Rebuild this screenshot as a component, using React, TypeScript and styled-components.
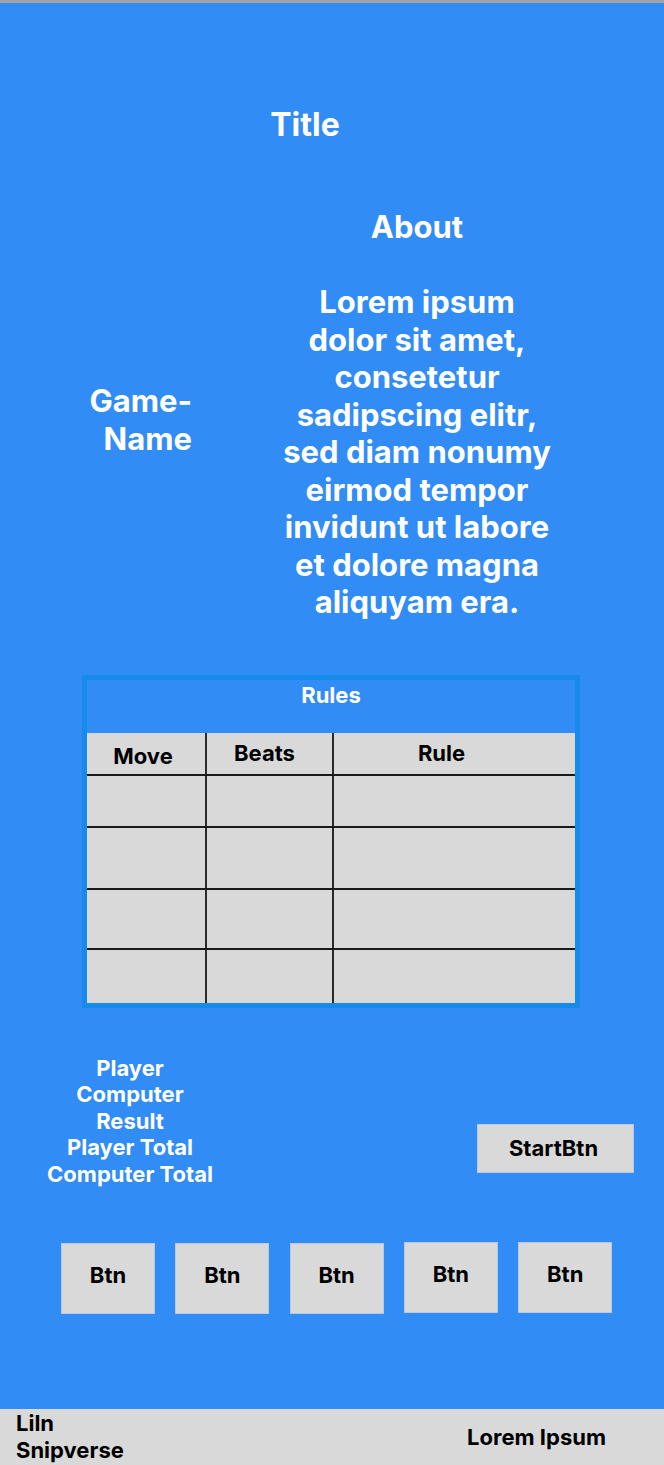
import * as React from 'react';
import styled, { createGlobalStyle } from 'styled-components';

const GlobalStyle = createGlobalStyle`
  html, body {
    margin: 0;
    padding: 0;
  }
  body {
    background: #318cf6;
    font-family: Inter, "Noto Sans", "Liberation Sans", sans-serif;
    font-weight: 700;
    color: #ffffff;
  }
  * {
    box-sizing: border-box;
  }
`;

const Page = styled.div`
  display: flex;
  flex-direction: column;
  min-height: 100vh;
  border-top: 3px solid #a3a3a3;
`;

const Main = styled.main`
  display: flex;
  flex-direction: column;
  flex: 1;
`;

const Header = styled.header`
  display: flex;
  justify-content: center;
  padding: 103px 54px 0 0;
`;

const Heading = styled.h1`
  margin: 0;
  font-size: 32px;
  line-height: 38px;
  font-weight: 700;
`;

const Hero = styled.section`
  display: grid;
  grid-template-columns: 192px 272px;
  column-gap: 89px;
  align-items: center;
  margin-top: 64px;
`;

const GameName = styled.div`
  text-align: right;
  font-size: 31px;
  line-height: 37.5px;
  padding-top: 11px;
`;

const AboutColumn = styled.div`
  display: flex;
  flex-direction: column;
  align-items: center;
  text-align: center;
`;

const AboutTitle = styled.h2`
  margin: 0 0 37px;
  font-size: 31px;
  line-height: 38px;
  font-weight: 700;
`;

const AboutText = styled.p`
  margin: 0;
  font-size: 31px;
  line-height: 37.5px;
`;

const RulesBox = styled.section`
  width: 498px;
  margin: 54px 0 0 82px;
  border: 5px solid #168be9;
`;

const RulesTitle = styled.div`
  height: 53px;
  padding-top: 2px;
  text-align: center;
  font-size: 22px;
  line-height: 27px;
`;

const Table = styled.table`
  width: 100%;
  border-collapse: collapse;
  table-layout: fixed;
  background: #d9d9d9;
  color: #000000;
`;

const HeadCell = styled.th<{ $width?: number; $drop?: number; $shift?: number }>`
  width: ${(p) => (p.$width ? `${p.$width}px` : 'auto')};
  height: 42px;
  padding: ${(p) => 7 + (p.$drop ?? 0)}px ${(p) => (p.$shift ?? 0) * 2}px 0 0;
  vertical-align: top;
  font-size: 22px;
  line-height: 27px;
  font-weight: 700;
  text-align: center;
  border-right: 2px solid #2a2a2a;
  border-bottom: 2px solid #1a1a1a;
  &:last-child {
    border-right: none;
  }
`;

const Row = styled.tr<{ $height: number }>`
  height: ${(p) => p.$height}px;
  & > td {
    border-right: 2px solid #2a2a2a;
    border-bottom: 2px solid #1a1a1a;
    padding: 0;
  }
  & > td:last-child {
    border-right: none;
  }
  &:last-child > td {
    border-bottom: none;
  }
`;

const ScoreRow = styled.section`
  display: flex;
  align-items: flex-start;
  justify-content: space-between;
  margin-top: 47px;
  padding: 0 30px;
`;

const Stats = styled.div`
  width: 200px;
  text-align: center;
  font-size: 22px;
  line-height: 26.5px;
`;

const GreyButton = styled.button`
  background: #d9d9d9;
  border: 1px solid #b7c9e3;
  border-radius: 0;
  color: #000000;
  font-family: inherit;
  font-weight: 700;
  font-size: 22px;
  padding: 0;
  cursor: pointer;
`;

const StartButton = styled(GreyButton)`
  width: 157px;
  height: 49px;
  margin-top: 69px;
  padding-right: 4px;
`;

const MoveRow = styled.section`
  display: flex;
  gap: 20.3px;
  margin-top: 56px;
  padding-left: 61px;
`;

const MoveButton = styled(GreyButton)<{ $lift?: boolean }>`
  width: 94px;
  height: 71px;
  padding-bottom: 7px;
  margin-top: ${(p) => (p.$lift ? -1 : 0)}px;
`;

const Footer = styled.footer`
  display: flex;
  align-items: center;
  justify-content: space-between;
  height: 56px;
  padding: 0 58px 0 16px;
  background: #d9d9d9;
  color: #000000;
  font-size: 22px;
`;

const Brand = styled.div`
  line-height: 27px;
`;

const FooterNote = styled.div`
  line-height: 27px;
`;

const rowHeights = [52, 62, 60, 54];
const moves = [false, false, false, true, true];

export default function App() {
  return (
    <Page>
      <GlobalStyle />
      <Main>
        <Header>
          <Heading>Title</Heading>
        </Header>
        <Hero>
          <GameName>
            Game-
            <br />
            Name
          </GameName>
          <AboutColumn>
            <AboutTitle>About</AboutTitle>
            <AboutText>
              Lorem ipsum dolor sit amet, consetetur sadipscing elitr, sed diam
              nonumy eirmod tempor invidunt ut labore et dolore magna aliquyam
              era.
            </AboutText>
          </AboutColumn>
        </Hero>
        <RulesBox>
          <RulesTitle>Rules</RulesTitle>
          <Table>
            <thead>
              <tr>
                <HeadCell $width={119} $drop={3} $shift={3}>
                  Move
                </HeadCell>
                <HeadCell $width={127} $shift={5}>
                  Beats
                </HeadCell>
                <HeadCell $shift={13}>Rule</HeadCell>
              </tr>
            </thead>
            <tbody>
              {rowHeights.map((h, i) => (
                <Row key={i} $height={h}>
                  <td />
                  <td />
                  <td />
                </Row>
              ))}
            </tbody>
          </Table>
        </RulesBox>
        <ScoreRow>
          <Stats>
            Player
            <br />
            Computer
            <br />
            Result
            <br />
            Player Total
            <br />
            Computer Total
          </Stats>
          <StartButton>StartBtn</StartButton>
        </ScoreRow>
        <MoveRow>
          {moves.map((lift, i) => (
            <MoveButton key={i} $lift={lift}>
              Btn
            </MoveButton>
          ))}
        </MoveRow>
      </Main>
      <Footer>
        <Brand>
          Liln
          <br />
          Snipverse
        </Brand>
        <FooterNote>Lorem Ipsum</FooterNote>
      </Footer>
    </Page>
  );
}
